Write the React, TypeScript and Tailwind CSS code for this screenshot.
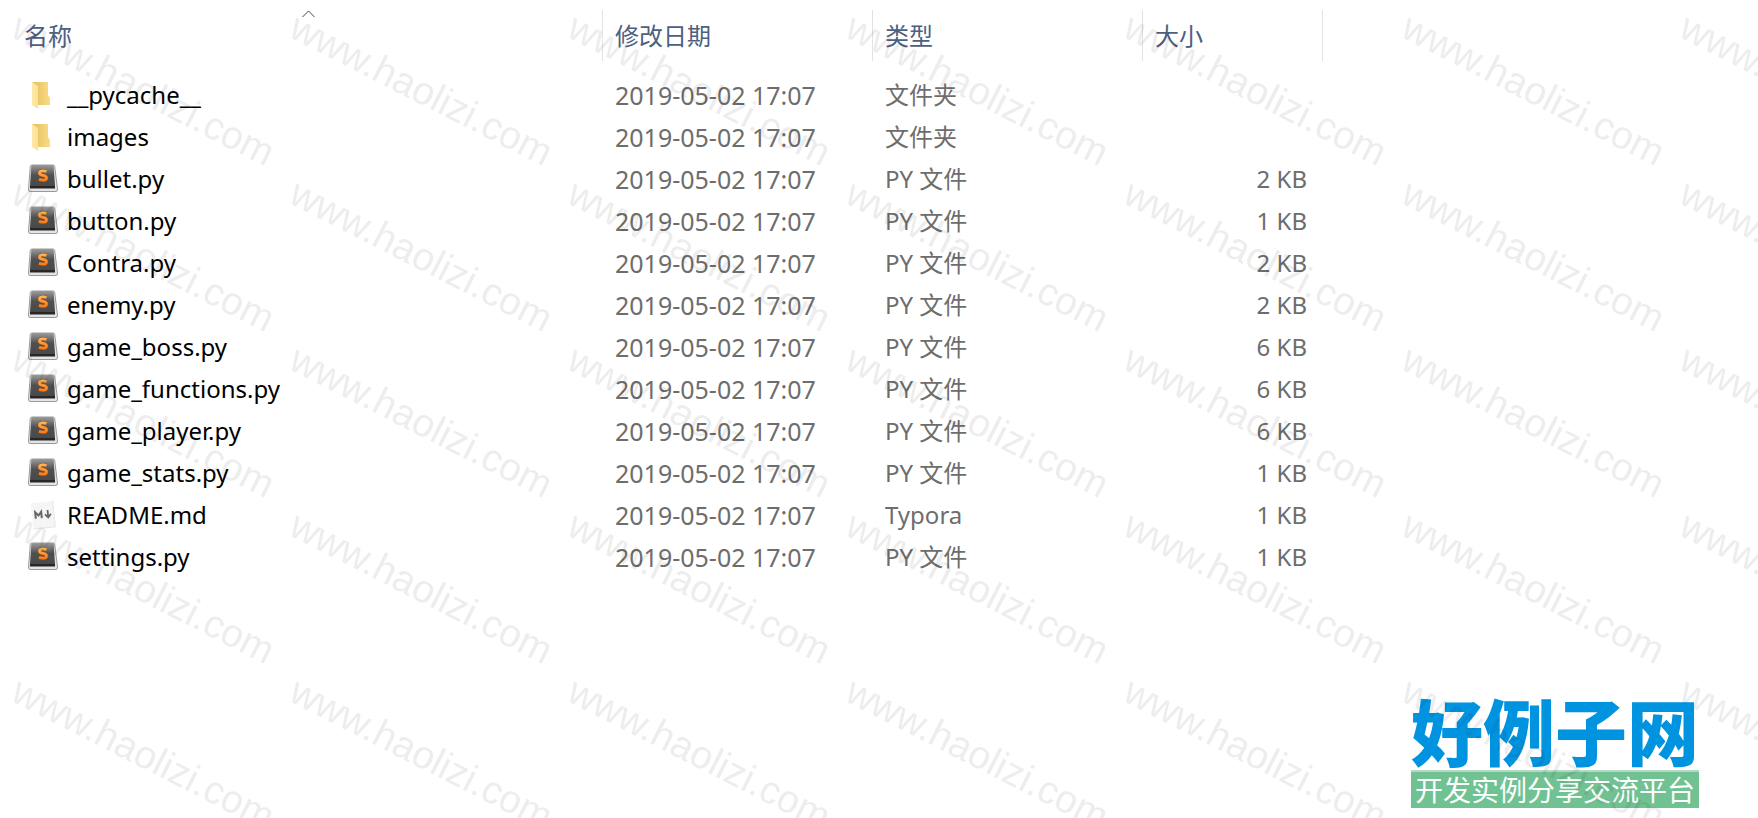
type FileKind = "folder" | "sublime" | "markdown";

type FileRow = {
  name: string;
  kind: FileKind;
  type: string;
  size?: string;
};

const MODIFIED = "2019-05-02 17:07";

const files: FileRow[] = [
  { name: "__pycache__", kind: "folder", type: "文件夹" },
  { name: "images", kind: "folder", type: "文件夹" },
  { name: "bullet.py", kind: "sublime", type: "PY 文件", size: "2 KB" },
  { name: "button.py", kind: "sublime", type: "PY 文件", size: "1 KB" },
  { name: "Contra.py", kind: "sublime", type: "PY 文件", size: "2 KB" },
  { name: "enemy.py", kind: "sublime", type: "PY 文件", size: "2 KB" },
  { name: "game_boss.py", kind: "sublime", type: "PY 文件", size: "6 KB" },
  { name: "game_functions.py", kind: "sublime", type: "PY 文件", size: "6 KB" },
  { name: "game_player.py", kind: "sublime", type: "PY 文件", size: "6 KB" },
  { name: "game_stats.py", kind: "sublime", type: "PY 文件", size: "1 KB" },
  { name: "README.md", kind: "markdown", type: "Typora", size: "1 KB" },
  { name: "settings.py", kind: "sublime", type: "PY 文件", size: "1 KB" },
];

const columns = ["名称", "修改日期", "类型", "大小"];

function FolderIcon() {
  return (
    <svg width="32" height="32" viewBox="0 0 32 32" aria-hidden="true">
      <path d="M5 3h16v13l2 3v7H5z" fill="url(#folder-back)" />
      <path d="M5 3l6 4v23l-6-4z" fill="url(#folder-front)" />
    </svg>
  );
}

function SublimeIcon() {
  return (
    <svg width="32" height="32" viewBox="0 0 32 32" aria-hidden="true">
      <path d="M5 2h21q1.500 0 1.700 1.500L30.500 26q.2 2.500-1.500 2.500H3q-1.700 0-1.500-2.500L3.300 3.500Q3.500 2 5 2z" fill="#e4e4e6" stroke="#9a9a9c" strokeWidth="1" />
      <path d="M6 2h19q1.500 0 1.700 1.500L28 23v2H3v-2L4.300 3.500Q4.500 2 6 2z" fill="url(#sublime-key)" />
      <path d="M3 23h25v2.500H3z" fill="#272727" />
      <path d="M19.500 8.500c-2-.8-7-1.300-7 1.700s7 1.300 7 4.500-5 2.700-7.500 1.600" fill="none" stroke="#8a4a1c" strokeWidth="4.500" opacity=".45" />
      <path d="M19.500 8.500c-2-.8-7-1.300-7 1.700s7 1.300 7 4.500-5 2.700-7.500 1.600" fill="none" stroke="url(#sublime-s)" strokeWidth="2.800" />
    </svg>
  );
}

function MarkdownIcon() {
  return (
    <svg width="32" height="32" viewBox="0 0 32 32" aria-hidden="true">
      <g transform="rotate(-6 16 16)">
        <path d="M5 3h22v26H5z" fill="#f5f5f5" />
        <path d="M5 29h22V3" fill="none" stroke="#e6e6e6" />
        <path d="M8.500 19v-6.500l3 3.500 3-3.500V19" fill="none" stroke="#666" strokeWidth="2" />
        <path d="M21 11.500V18m-3-2.500l3 3.500 3-3.500" fill="none" stroke="#666" strokeWidth="1.800" />
      </g>
    </svg>
  );
}

const icons = {
  folder: FolderIcon,
  sublime: SublimeIcon,
  markdown: MarkdownIcon,
};

// gradients shared by the row icons
function IconDefs() {
  return (
    <svg width="0" height="0" className="absolute" aria-hidden="true">
      <defs>
        <linearGradient id="folder-back">
          <stop offset=".3" stopColor="#e9c66a" />
          <stop offset="1" stopColor="#fbdc86" />
        </linearGradient>
        <linearGradient id="folder-front">
          <stop offset="0" stopColor="#ffe9a8" />
          <stop offset="1" stopColor="#fde094" />
        </linearGradient>
        <linearGradient id="sublime-key" x2="0" y2="1">
          <stop offset="0" stopColor="#9b9b9b" />
          <stop offset=".45" stopColor="#4f4f4f" />
          <stop offset="1" stopColor="#484848" />
        </linearGradient>
        <linearGradient id="sublime-s" x2="0" y2="1">
          <stop offset="0" stopColor="#ffb04f" />
          <stop offset="1" stopColor="#ff7c1c" />
        </linearGradient>
      </defs>
    </svg>
  );
}

function Watermark() {
  return (
    <svg className="pointer-events-none absolute inset-0 h-full w-full" aria-hidden="true">
      <defs>
        <pattern id="watermark" width="278" height="166" patternUnits="userSpaceOnUse">
          <text
            x="9"
            y="36"
            transform="rotate(27 9 36)"
            fontFamily="'Liberation Sans', Arial, sans-serif"
            fontSize="39"
            fill="#000"
            fillOpacity=".07"
          >
            www.haolizi.com
          </text>
        </pattern>
      </defs>
      <rect width="100%" height="100%" fill="url(#watermark)" />
    </svg>
  );
}

function SiteLogo() {
  return (
    <div className="mr-[59px] mb-2.5 w-72 self-end text-center whitespace-nowrap">
      <div className="text-[72px] leading-[76px] font-black text-[#0093e0]">好例子网</div>
      <div className="border-t-2 border-[#b5d9c4] bg-[#70c292] text-[28px] leading-9 text-white">开发实例分享交流平台</div>
    </div>
  );
}

export default function App() {
  return (
    <main className="relative flex min-h-screen flex-col justify-between overflow-hidden bg-white font-['Noto_Sans','Noto_Sans_CJK_SC',sans-serif] text-2xl">
      <IconDefs />
      <table className="w-full table-fixed text-left">
        <colgroup>
          <col className="w-[603px]" />
          <col className="w-[270px]" />
          <col className="w-[270px]" />
          <col className="w-[180px]" />
          <col />
        </colgroup>
        <thead>
          <tr>
            {columns.map((label, i) => (
              <th key={label} className="relative h-[74px] p-0 pt-2.5 align-top font-normal">
                {i === 0 && (
                  <svg className="absolute top-2.5 left-1/2" width="13" height="8" viewBox="0 0 13 8" aria-hidden="true">
                    <path d="M.5 7L6.500 1l6 6" fill="none" stroke="#444" />
                  </svg>
                )}
                <button
                  type="button"
                  className={`block h-[51px] w-full border-r border-[#e2e2e2] text-left text-[#4c607f] ${i === 0 ? "pl-6" : "pl-3"}`}
                >
                  {label}
                </button>
              </th>
            ))}
            <td />
          </tr>
        </thead>
        <tbody className="text-[#6d6d6d]">
          {files.map((file) => {
            const Icon = icons[file.kind];
            return (
              <tr key={file.name} className="h-[42px]">
                <td className="p-0">
                  <div className="flex items-center gap-2 pl-[27px] text-black">
                    <Icon />
                    <span className="leading-[42px]">{file.name}</span>
                  </div>
                </td>
                <td className="p-0 pl-3 text-[25px] leading-[42px]">{MODIFIED}</td>
                <td className="p-0 pl-3 leading-[42px]">{file.type}</td>
                <td className="p-0 pr-4 text-right leading-[42px]">{file.size}</td>
                <td />
              </tr>
            );
          })}
        </tbody>
      </table>
      <SiteLogo />
      <Watermark />
    </main>
  );
}
